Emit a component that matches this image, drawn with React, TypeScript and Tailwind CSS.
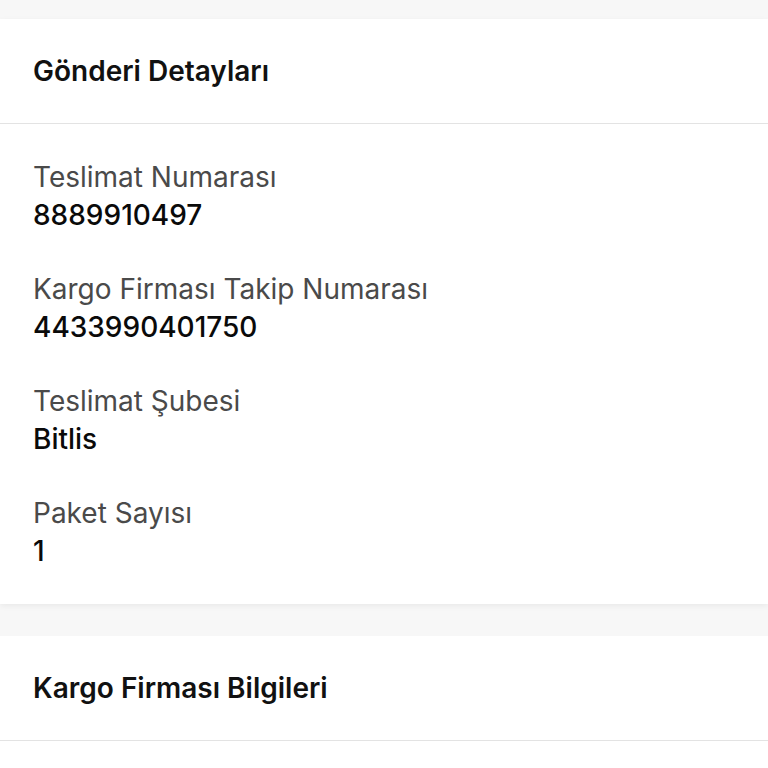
import React from "react";

const details = [
  { label: "Teslimat Numarası", value: "8889910497" },
  { label: "Kargo Firması Takip Numarası", value: "4433990401750" },
  { label: "Teslimat Şubesi", value: "Bitlis" },
  { label: "Paket Sayısı", value: "1" },
];

const App: React.FC = () => {
  return (
    <div className="min-h-screen bg-[#f7f7f7] pt-[19px]" style={{ fontFamily: "Inter, 'Noto Sans', sans-serif" }}>
      {/* Gönderi detayları kartı */}
      <div className="bg-white shadow-[0_2px_6px_rgba(0,0,0,0.06)]">
        <div className="h-[105px] flex items-center px-[33px] border-b border-[#e3e3e3]">
          <h2 className="text-[28px] font-semibold text-[#111]">Gönderi Detayları</h2>
        </div>
        <div className="px-[33px] pt-[34px] pb-[34px] flex flex-col gap-[36px]">
          {details.map((d) => (
            <div key={d.label} className="flex flex-col">
              <span className="text-[28px] leading-[38px] text-[#4a4a4a]">{d.label}</span>
              <span className="text-[28px] leading-[38px] font-medium text-[#0a0a0a]">{d.value}</span>
            </div>
          ))}
        </div>
      </div>

      {/* Kargo firması bilgileri kartı */}
      <div className="mt-[32px] bg-white">
        <div className="h-[105px] flex items-center px-[33px] border-b border-[#e3e3e3]">
          <h2 className="text-[28px] font-semibold text-[#111]">Kargo Firması Bilgileri</h2>
        </div>
        <div className="h-[40px]" />
      </div>
    </div>
  );
};

export default App;
